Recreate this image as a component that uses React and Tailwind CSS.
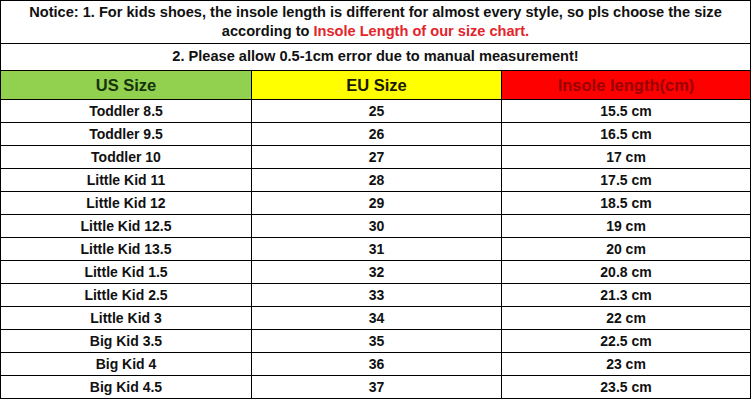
import React from 'react';

const rows = [
  ['Toddler 8.5', '25', '15.5 cm'],
  ['Toddler 9.5', '26', '16.5 cm'],
  ['Toddler 10', '27', '17 cm'],
  ['Little Kid 11', '28', '17.5 cm'],
  ['Little Kid 12', '29', '18.5 cm'],
  ['Little Kid 12.5', '30', '19 cm'],
  ['Little Kid 13.5', '31', '20 cm'],
  ['Little Kid 1.5', '32', '20.8 cm'],
  ['Little Kid 2.5', '33', '21.3 cm'],
  ['Little Kid 3', '34', '22 cm'],
  ['Big Kid 3.5', '35', '22.5 cm'],
  ['Big Kid 4', '36', '23 cm'],
  ['Big Kid 4.5', '37', '23.5 cm'],
];

export default function App() {
  return (
    <div className="w-[753px] h-[400px] bg-white overflow-hidden">
      <div className="w-[751px] border border-black font-['Liberation_Sans',Arial,sans-serif] font-bold text-[#111]">
        {/* Notice */}
        <div className="h-[42px] pt-[2px] text-center text-[14.6px] leading-[19px]">
          Notice: 1. For kids shoes, the insole length is different for almost every style, so pls choose the size
          <br />
          according to <span className="text-[#e3242b]">Insole Length of our size chart.</span>
        </div>
        <div className="h-[27px] border-t border-black flex items-center justify-center text-[14.6px]">
          2. Please allow 0.5-1cm error due to manual measurement!
        </div>

        {/* Header */}
        <div className="grid grid-cols-[250px_250px_249px] h-[29px] border-t border-black text-[16.5px]">
          <div className="bg-[#92d050] text-[#16330a] flex items-center justify-center">US Size</div>
          <div className="bg-[#ffff00] text-[#1a1a00] border-l border-black flex items-center justify-center">EU Size</div>
          <div className="bg-[#ff0000] text-[#9a0000] border-l border-black flex items-center justify-center">Insole length(cm)</div>
        </div>

        {/* Rows */}
        {rows.map(([us, eu, cm]) => (
          <div key={us} className="grid grid-cols-[250px_250px_249px] h-[23px] border-t border-black text-[14px]">
            <div className="flex items-center justify-center">{us}</div>
            <div className="border-l border-black flex items-center justify-center">{eu}</div>
            <div className="border-l border-black flex items-center justify-center">{cm}</div>
          </div>
        ))}
      </div>
    </div>
  );
}
